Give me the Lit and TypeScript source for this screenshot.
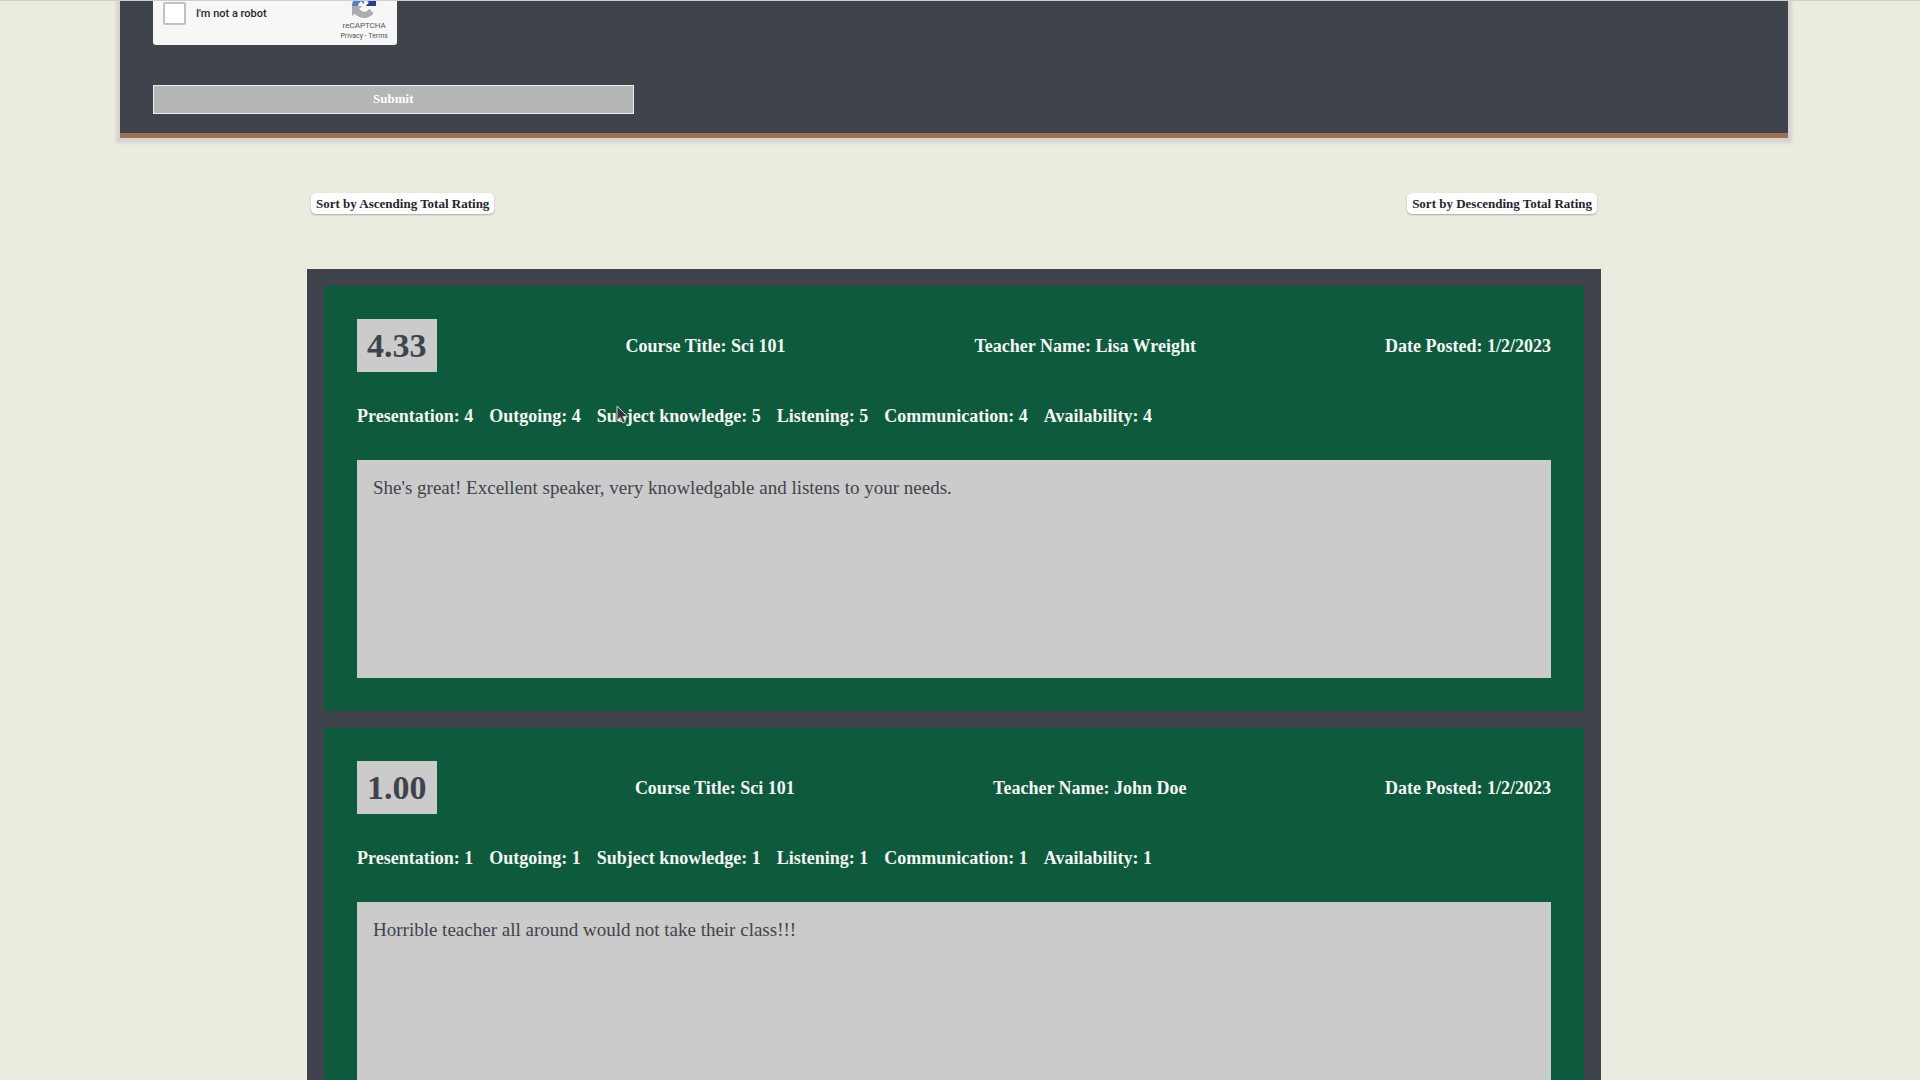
import { LitElement, html, css } from "lit";
import { customElement, property, state } from "lit/decorators.js";

interface Review {
  total: string;
  course: string;
  teacher: string;
  date: string;
  scores: [string, number][];
  comment: string;
}

const REVIEWS: Review[] = [
  {
    total: "4.33",
    course: "Sci 101",
    teacher: "Lisa Wreight",
    date: "1/2/2023",
    scores: [
      ["Presentation", 4],
      ["Outgoing", 4],
      ["Subject knowledge", 5],
      ["Listening", 5],
      ["Communication", 4],
      ["Availability", 4],
    ],
    comment: "She's great! Excellent speaker, very knowledgable and listens to your needs.",
  },
  {
    total: "1.00",
    course: "Sci 101",
    teacher: "John Doe",
    date: "1/2/2023",
    scores: [
      ["Presentation", 1],
      ["Outgoing", 1],
      ["Subject knowledge", 1],
      ["Listening", 1],
      ["Communication", 1],
      ["Availability", 1],
    ],
    comment: "Horrible teacher all around would not take their class!!!",
  },
];

@customElement("captcha-box")
class CaptchaBox extends LitElement {
  static styles = css`
    :host {
      display: flex;
      box-sizing: border-box;
      width: 244px;
      height: 44px;
      padding: 0 9px 0 10px;
      background: #f7f7f7;
      border-radius: 0 0 3px 3px;
      font-family: Roboto, "Liberation Sans", sans-serif;
      color: #26282c;
    }
    .check {
      display: flex;
      align-items: center;
      gap: 10px;
      height: 24px;
      flex: 1;
      font-size: 11px;
      font-weight: 500;
    }
    .tick {
      appearance: none;
      box-sizing: border-box;
      width: 23px;
      height: 23px;
      margin: 0;
      background: #fff;
      border: 2px solid #c1c1c1;
      border-radius: 2px;
    }
    .brand {
      display: flex;
      flex-direction: column;
      align-items: center;
      color: #555;
    }
    .logo {
      display: block;
      width: 24px;
      height: 17px;
    }
    .name {
      font-size: 8px;
      line-height: 12px;
      margin-top: 2px;
    }
    .legal {
      font-size: 7px;
      line-height: 8px;
      white-space: nowrap;
    }
    .legal a {
      color: inherit;
      text-decoration: none;
    }
  `;

  render() {
    return html`
      <label class="check"><input class="tick" type="checkbox" />I'm not a robot</label>
      <div class="brand">
        <svg class="logo" viewBox="0 19 64 45" aria-hidden="true">
          <path
            fill="#263f9c"
            d="M64 31.955l-.033-1.37V4.687l-7.16 7.16C50.948 4.674 42.033.093 32.05.093c-10.4 0-19.622 4.96-25.458 12.64l11.736 11.86a15.55 15.55 0 0 1 4.754-5.334c2.05-1.6 4.952-2.906 8.968-2.906.485 0 .86.057 1.135.163 4.976.393 9.288 3.14 11.828 7.124l-8.307 8.307L64 31.953"
          />
          <path
            fill="#4f7fd0"
            d="M31.862.094l-1.37.033H4.594l7.16 7.16C4.58 13.147 0 22.06 0 32.046c0 10.4 4.96 19.622 12.64 25.458L24.5 45.768a15.55 15.55 0 0 1-5.334-4.754c-1.6-2.05-2.906-4.952-2.906-8.968 0-.485.057-.86.163-1.135.393-4.976 3.14-9.288 7.124-11.828l8.307 8.307L31.86.095"
          />
          <path
            fill="#ababab"
            d="M.001 32.045l.033 1.37v25.898l7.16-7.16c5.86 7.173 14.774 11.754 24.76 11.754 10.4 0 19.622-4.96 25.458-12.64l-11.736-11.86a15.55 15.55 0 0 1-4.754 5.334c-2.05 1.6-4.952 2.906-8.968 2.906-.485 0-.86-.057-1.135-.163-4.976-.393-9.288-3.14-11.828-7.124l8.307-8.307c-10.522.04-22.4.066-27.295-.005"
          />
        </svg>
        <span class="name">reCAPTCHA</span>
        <span class="legal"><a href="#privacy">Privacy</a> - <a href="#terms">Terms</a></span>
      </div>
    `;
  }
}

@customElement("review-card")
class ReviewCard extends LitElement {
  @property({ attribute: false }) review!: Review;

  static styles = css`
    :host {
      display: flex;
      flex-direction: column;
      padding: 33px;
      background: #0e5a3d;
      color: #f4f7f3;
      font-size: 18px;
      line-height: 24px;
    }
    .head {
      display: flex;
      justify-content: space-between;
      align-items: center;
      font-weight: 700;
    }
    .total {
      padding: 6px 10px;
      background: #cbcbcb;
      color: #3f444c;
      font-size: 34px;
      line-height: 41px;
    }
    .scores {
      display: flex;
      flex-wrap: wrap;
      gap: 16px;
      margin: 32px 0;
      padding: 0;
      list-style: none;
      font-weight: 700;
    }
    .comment {
      box-sizing: border-box;
      min-height: 218px;
      margin: 0;
      padding: 16px;
      background: #cbcbcb;
      color: #3f444c;
      font-size: 19px;
    }
  `;

  render() {
    const r = this.review;
    return html`
      <div class="head">
        <span class="total">${r.total}</span>
        <span>Course Title: ${r.course}</span>
        <span>Teacher Name: ${r.teacher}</span>
        <span>Date Posted: ${r.date}</span>
      </div>
      <ul class="scores">
        ${r.scores.map(([name, value]) => html`<li>${name}: ${value}</li>`)}
      </ul>
      <p class="comment">${r.comment}</p>
    `;
  }
}

@customElement("app-root")
class AppRoot extends LitElement {
  @state() private reviews = REVIEWS;

  static styles = css`
    :host {
      display: block;
      position: relative;
      box-sizing: border-box;
      height: 100vh;
      overflow: hidden;
      padding-right: 12px;
      border-top: 1px solid #cccfca;
      background: #eaecdf;
      font-family: "Liberation Serif", "Times New Roman", serif;
    }
    .form {
      display: flex;
      flex-direction: column;
      align-items: flex-start;
      gap: 40px;
      margin: 0 120px;
      padding: 0 33px 19px;
      background: #3f444c;
      border-bottom: 5px solid #9b7350;
      box-shadow: 0 1px 3px 4px #d8d2d3;
    }
    .submit {
      box-sizing: border-box;
      width: 30%;
      height: 29px;
      padding: 0 0 2px;
      background: #b4b5b6;
      border: 1px solid #eceded;
      color: #fff;
      font: 700 13px/16px "Liberation Serif", "Times New Roman", serif;
    }
    .sorts {
      display: flex;
      justify-content: space-between;
      margin: 55px 307px;
      padding: 0 4px;
    }
    .sort {
      height: 21px;
      padding: 0 5px;
      background: #fff;
      border: 0;
      border-radius: 5px;
      box-shadow: 0 1px 2px #a9aaa6;
      color: #24262c;
      font: 700 13px/20px "Liberation Serif", "Times New Roman", serif;
    }
    .list {
      display: flex;
      flex-direction: column;
      gap: 17px;
      margin: 0 307px;
      padding: 17px;
      background: #3f444c;
    }
    .cursor {
      position: absolute;
      left: 616px;
      top: 404px;
      width: 13px;
      height: 20px;
    }
  `;

  private sortBy(direction: number) {
    this.reviews = [...this.reviews].sort((a, b) => direction * (Number(a.total) - Number(b.total)));
  }

  render() {
    return html`
      <form class="form" @submit=${(e: Event) => e.preventDefault()}>
        <captcha-box></captcha-box>
        <button class="submit" type="submit">Submit</button>
      </form>
      <div class="sorts">
        <button class="sort" type="button" @click=${() => this.sortBy(1)}>Sort by Ascending Total Rating</button>
        <button class="sort" type="button" @click=${() => this.sortBy(-1)}>Sort by Descending Total Rating</button>
      </div>
      <main class="list">
        ${this.reviews.map((r) => html`<review-card .review=${r}></review-card>`)}
      </main>
      <svg class="cursor" viewBox="0 0 13 20" aria-hidden="true">
        <path
          d="M1 1v14.500l3.300-3.100 2.400 5.600 2.600-1.100-2.400-5.400h4.600z"
          fill="#33363e"
          stroke="#c9d3ce"
          stroke-width="1"
        />
      </svg>
    `;
  }
}
